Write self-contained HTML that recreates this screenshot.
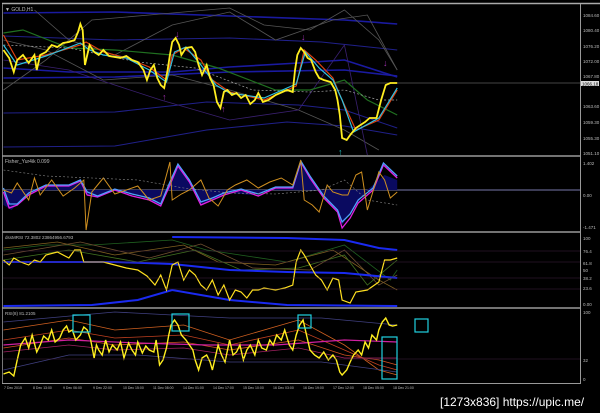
<!DOCTYPE html>
<html><head><style>
html,body{margin:0;padding:0;background:#000;width:600px;height:413px;overflow:hidden}
svg{display:block}
text{font-family:"Liberation Sans",sans-serif;fill:#bbb}
.d polyline,.d path{vector-effect:non-scaling-stroke}
</style></head><body>
<svg width="600" height="413" viewBox="0 0 600 413">
<rect width="600" height="413" fill="#000"/>
<!-- frame -->
<line x1="2" y1="3.5" x2="600" y2="3.5" stroke="#aaa" stroke-width="1.5"/>
<line x1="580.5" y1="4" x2="580.5" y2="384" stroke="#999"/>
<line x1="2.5" y1="4" x2="2.5" y2="384" stroke="#777"/>
<line x1="2" y1="156" x2="581" y2="156" stroke="#999" stroke-width="1.5"/>
<line x1="2" y1="232" x2="581" y2="232" stroke="#999" stroke-width="1.5"/>
<line x1="2" y1="308" x2="581" y2="308" stroke="#999" stroke-width="1.5"/>
<line x1="2" y1="383.5" x2="581" y2="383.5" stroke="#999"/>
<line x1="3" y1="83" x2="580" y2="83" stroke="#888" stroke-width="0.6"/>
<line x1="3" y1="190" x2="580" y2="190" stroke="#7777aa" stroke-width="1"/>
<g class="d" transform="scale(1.148,1)">
<g fill="none" stroke-width="1.6">
<polyline stroke="#1a1aa0" points="3,13 100,12 200,16 300,20 346,24"/>
<polyline stroke="#1a1aa0" points="3,68 60,72 150,72 200,67 260,63 300,60 346,77"/>
<polyline stroke="#1a1aa0" points="3,78 100,77 200,72 300,70 346,76"/>
<polyline stroke="#20208a" stroke-width="1" points="3,113 100,112 180,102 260,105 300,110 346,128"/>
<polyline stroke="#20208a" stroke-width="1" points="3,147 100,146 180,130 250,122 300,126 346,135"/>
<polyline stroke="#20208a" stroke-width="1" points="3,36 100,40 200,38 280,42 346,50"/>
</g>
<g fill="none" stroke="#555" stroke-width="0.8">
<polyline points="3,90 40,60 80,20 130,15 180,10 200,8 230,25 270,30 300,10 330,40 346,70"/>
<polyline points="3,40 40,50 90,80 150,75 200,90 260,110 300,130 330,150"/>
<polyline points="30,10 60,40 100,55 150,25 200,12 240,40 290,20 320,15 346,70"/>
</g>
<polyline fill="none" stroke="#3a2070" stroke-width="0.8" points="3,60 60,70 140,100 200,120 260,110 300,45 320,155"/>
<polyline fill="none" stroke="#207020" stroke-width="1.2" points="3,33 20,30 60,48 100,50 150,55 190,68 240,90 270,90 300,80 320,100 346,115"/>
<polyline fill="none" stroke="#aaa" stroke-width="0.7" stroke-dasharray="2,2" points="3,45 60,48 120,62 170,68 220,90 270,92 300,90 330,100 346,100"/>
<polyline fill="none" stroke="#e04010" stroke-width="1.2" points="3,35 15,60 40,55 70,45 75,42 90,52 110,58 130,67 145,80 150,55 160,48 175,60 185,80 200,92 230,100 258,86 265,50 275,60 290,78 296,95 310,130 330,120 346,90"/>
<polyline fill="none" stroke="#30c0e0" stroke-width="1.2" points="3,45 15,65 40,56 70,43 78,50 90,55 110,58 130,70 145,82 152,52 162,47 175,65 188,85 200,93 230,98 258,84 266,52 278,68 290,80 298,100 308,132 330,118 346,88"/>
<polyline fill="none" stroke="#ffee20" stroke-width="1.8" points="3,50 8,58 12,72 15,60 20,55 25,63 30,55 32,70 35,55 40,52 45,45 50,47 55,43 60,42 65,40 68,32 70,24 72,30 74,65 78,45 82,52 86,55 90,50 95,56 100,57 105,58 110,56 115,60 120,62 125,70 128,80 131,70 134,65 137,78 140,85 143,88 146,70 148,55 150,42 153,38 156,45 158,55 162,48 167,47 170,52 173,65 176,75 178,70 180,65 183,78 186,85 189,102 192,108 195,92 198,90 202,95 206,93 210,98 214,95 218,104 222,100 225,93 229,102 234,100 240,95 246,92 250,90 255,92 257,70 259,55 262,48 265,52 268,58 271,60 275,72 278,78 282,80 288,82 292,90 294,100 296,115 298,138 302,140 305,135 310,128 314,125 318,122 322,118 328,118 332,100 336,85 340,83 346,83"/>
<!-- Fisher -->
<path d="M3,190 L3,205 L10,210 L20,198 L40,186 L60,185 L70,180 L75,195 L85,198 L100,190 L120,195 L140,205 L150,178 L155,165 L165,180 L175,205 L185,200 L200,193 L220,195 L240,188 L255,188 L262,162 L270,178 L280,195 L295,212 L298,225 L310,205 L320,190 L335,175 L346,180 L346,190 Z" fill="#0a0a60"/>
<polyline fill="none" stroke="#e020e0" stroke-width="1.3" points="3,192 8,208 15,205 25,195 40,186 60,186 70,181 76,195 85,197 100,190 115,196 130,200 140,206 148,185 155,166 165,182 175,205 185,200 195,195 210,190 225,196 240,188 255,188 262,162 270,178 282,198 294,212 298,228 305,218 312,203 325,190 334,165 346,178"/>
<polyline fill="none" stroke="#50a0ff" stroke-width="1.3" points="3,188 8,204 15,204 25,193 40,185 60,185 70,180 76,192 85,196 100,189 115,194 130,198 140,204 148,182 155,164 165,180 175,202 185,198 195,193 210,189 225,194 240,187 255,187 262,161 270,176 282,196 294,210 298,222 305,214 312,200 325,188 334,163 346,176"/>
<polyline fill="none" stroke="#d09020" stroke-width="1" points="3,190 10,193 15,183 25,200 30,178 35,195 45,180 55,196 65,188 73,180 75,230 80,192 90,178 100,194 110,190 120,186 130,200 140,196 145,175 148,162 150,200 158,194 165,190 175,180 182,198 190,206 198,190 205,185 215,180 225,188 235,182 245,178 255,185 262,160 265,200 272,205 278,212 285,185 290,192 298,195 303,195 310,175 315,172 320,210 330,172 335,180 340,198 346,192"/>
<polyline fill="none" stroke="#888" stroke-width="0.6" stroke-dasharray="2,2" points="3,170 40,176 80,178 120,180 160,188 200,193 240,194 280,190 300,180 320,200 346,205"/>
<!-- dss -->
<g fill="none" stroke-width="0.8">
<polyline stroke="#206020" points="3,250 40,245 80,245 150,240 180,250 250,262 300,245 340,280 346,270"/>
<polyline stroke="#806020" points="3,248 50,242 100,255 160,245 190,262 240,265 290,250 330,280 346,290"/>
<polyline stroke="#407020" points="3,260 60,250 120,262 170,250 210,270 260,268 300,255 320,285 346,260"/>
<polyline stroke="#705030" points="3,255 70,242 130,258 175,244 220,268 270,270 300,250 330,285 346,275"/>
</g>
<polyline fill="none" stroke="#1a2af0" stroke-width="2" points="3,262 50,262 100,262 150,264 200,270 250,272 300,273 346,278"/>
<polyline fill="none" stroke="#1a2af0" stroke-width="2" points="3,306 80,305 120,300 150,290 200,300 250,305 346,306"/>
<polyline fill="none" stroke="#1a2af0" stroke-width="2" points="150,237 250,238 300,240 330,248 346,250"/>
<polyline fill="none" stroke="#ffe020" stroke-width="1.2" points="3,260 8,265 12,258 18,262 25,265 30,260 35,262 40,255 50,252 60,258 65,250 70,250 73,262 80,262 90,262 100,265 110,268 120,270 128,276 135,285 140,275 145,290 150,265 155,262 160,280 165,270 170,275 175,285 180,290 185,280 190,295 195,285 200,300 205,290 210,292 215,298 220,290 225,290 230,288 240,290 248,288 255,285 258,262 262,250 265,255 270,265 275,275 280,280 285,290 290,278 295,280 298,300 305,303 310,292 320,290 330,282 335,260 340,260 346,258"/>
<!-- RSI -->
<g fill="none" stroke-width="0.8">
<polyline stroke="#d06020" points="3,330 60,320 100,330 160,325 200,340 260,320 300,345 330,370 346,375"/>
<polyline stroke="#c04020" points="3,340 60,330 100,338 160,335 200,345 260,330 300,350 330,365 346,370"/>
<polyline stroke="#d05020" points="3,348 60,338 100,345 160,342 200,350 260,340 300,355 330,360 346,365"/>
<polyline stroke="#a02060" points="3,352 60,345 100,350 160,348 200,355 260,348 300,358 346,358"/>
<polyline stroke="#404080" points="3,322 100,312 200,318 280,318 346,325"/>
<polyline stroke="#404080" points="3,370 60,355 120,355 200,362 280,362 346,372"/>
</g>
<polyline fill="none" stroke="#d020a0" stroke-width="1.2" points="3,345 60,340 120,343 180,345 240,345 300,340 346,342"/>
<polyline fill="none" stroke="#ffee20" stroke-width="1.4" points="3,374 8,372 12,376 15,360 18,345 22,338 25,348 28,335 32,352 35,345 38,336 42,340 45,330 48,342 52,338 55,330 58,326 60,332 63,330 66,340 70,335 73,327 76,330 79,340 82,358 84,345 86,350 89,355 92,340 95,352 98,345 102,350 105,342 108,358 112,343 115,350 118,355 120,342 124,353 127,346 130,350 134,352 136,340 139,365 142,360 145,348 147,335 149,325 152,320 155,325 158,335 162,340 165,345 168,350 170,360 173,370 176,358 180,355 183,362 185,370 188,355 190,345 193,355 196,362 200,340 203,355 206,352 209,345 212,360 215,350 218,345 222,355 225,340 228,348 232,350 235,340 238,345 241,335 245,340 248,330 252,345 255,350 258,335 261,325 264,320 266,330 268,340 270,350 274,355 278,358 282,352 286,360 290,355 293,360 296,372 298,375 302,370 305,362 308,355 312,350 315,355 318,342 321,348 324,335 328,340 330,330 333,322 336,318 339,325 342,326 346,325"/>
</g>
<g font-size="9"><text x="175" y="37" style="fill:#a030b0">↓</text><text x="301" y="40" style="fill:#a030b0">↓</text><text x="383" y="66" style="fill:#a030b0">↓</text><text x="162" y="100" style="fill:#a030b0">↑</text><text x="221" y="112" style="fill:#a030b0">↑</text><text x="338" y="155" style="fill:#20c0c0">↑</text></g>
<text x="5" y="11" font-size="5">▼ GOLD,H1</text>
<g font-size="4.5" style="fill:#aaa">
<text x="583" y="17">1084.60</text><text x="583" y="32">1080.40</text><text x="583" y="48">1076.20</text><text x="583" y="63">1072.00</text><text x="583" y="78">1067.80</text><text x="583" y="108">1063.60</text><text x="583" y="124">1059.30</text><text x="583" y="140">1055.30</text><text x="583" y="155">1051.10</text>
</g>
<rect x="581" y="81" width="18" height="5" fill="#ddd"/><text x="582" y="85.5" font-size="4.5" style="fill:#000">1066.18</text>
<text x="5" y="163" font-size="5">Fisher_Yur4ik 0.099</text>
<text x="583" y="165" font-size="4.5">1.402</text><text x="583" y="197" font-size="4.5">0.00</text><text x="583" y="229" font-size="4.5">-1.471</text>
<text x="5" y="239" font-size="4.5">dssMRSI 72.3802 23864956.6793</text>
<g font-size="4.5"><text x="583" y="240">100</text><text x="583" y="253">76.4</text><text x="583" y="265">61.8</text><text x="583" y="272">50</text><text x="583" y="280">38.2</text><text x="583" y="290">23.6</text><text x="583" y="306">0.00</text></g>
<g stroke="#402040" stroke-width="0.5"><line x1="3" y1="251" x2="580" y2="251"/><line x1="3" y1="262" x2="580" y2="262"/><line x1="3" y1="278" x2="580" y2="278"/><line x1="3" y1="289" x2="580" y2="289"/></g>
<text x="5" y="315" font-size="4.5">RSI(8) 81.2105</text>
<g font-size="4.5"><text x="583" y="314">100</text><text x="583" y="362">32</text><text x="583" y="381">0</text></g>
<line x1="3" y1="359" x2="580" y2="359" stroke="#402040" stroke-width="0.5"/>
<g fill="none" stroke="#20d0e0" stroke-width="1.2">
<rect x="73" y="315" width="17" height="17"/>
<rect x="172" y="314" width="17" height="17"/>
<rect x="298" y="315" width="13" height="13"/>
<rect x="415" y="319" width="13" height="13"/>
<rect x="382" y="337" width="15" height="42"/>
</g>
<g font-size="3.5" style="fill:#aaa">
<text x="4" y="389">7 Dec 2015</text><text x="33" y="389">8 Dec 13:00</text><text x="63" y="389">9 Dec 06:00</text><text x="93" y="389">9 Dec 22:00</text><text x="123" y="389">10 Dec 15:00</text><text x="153" y="389">11 Dec 08:00</text><text x="183" y="389">14 Dec 01:00</text><text x="213" y="389">14 Dec 17:00</text><text x="243" y="389">15 Dec 10:00</text><text x="273" y="389">16 Dec 03:00</text><text x="303" y="389">16 Dec 19:00</text><text x="333" y="389">17 Dec 12:00</text><text x="363" y="389">18 Dec 05:00</text><text x="393" y="389">18 Dec 21:00</text>
</g>
<text x="440" y="406" font-size="12" style="fill:#fff">[1273x836] https://upic.me/</text>
</svg>
</body></html>
